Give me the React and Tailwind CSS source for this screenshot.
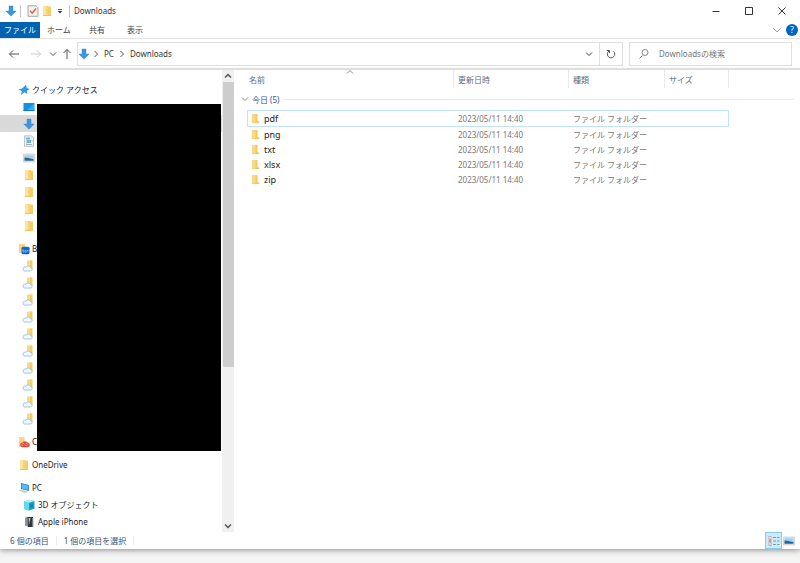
import React, { useState } from "react";

const files = [
  { name: "pdf", date: "2023/05/11 14:40", type: "ファイル フォルダー" },
  { name: "png", date: "2023/05/11 14:40", type: "ファイル フォルダー" },
  { name: "txt", date: "2023/05/11 14:40", type: "ファイル フォルダー" },
  { name: "xlsx", date: "2023/05/11 14:40", type: "ファイル フォルダー" },
  { name: "zip", date: "2023/05/11 14:40", type: "ファイル フォルダー" },
];

const groups = [
  {
    label: "クイック アクセス",
    icon: "star",
    items: [
      { icon: "desktop" },
      { icon: "download", active: true },
      { icon: "document" },
      { icon: "picture" },
      { icon: "folder" },
      { icon: "folder" },
      { icon: "folder" },
      { icon: "folder" },
    ],
  },
  {
    label: "B",
    icon: "box",
    items: Array.from({ length: 10 }, () => ({ icon: "cloudFolder" })),
  },
  { label: "C", icon: "creative", items: [] },
  { label: "OneDrive", icon: "folder", items: [] },
  {
    label: "PC",
    icon: "pc",
    items: [
      { icon: "cube", label: "3D オブジェクト" },
      { icon: "phone", label: "Apple iPhone" },
    ],
  },
];

const shapes = {
  folder: (
    <>
      <path d="M2 1h6v10H2z" fill="#f7d478" />
      <path d="M2 1h3v10H2z" fill="#fbe3a0" />
      <path d="M7 2l3-.5V10l-1 1H7z" fill="#f5cd68" />
      <path d="M2 10h8v1H2z" fill="#efc25a" />
    </>
  ),
  // Folder with its flap open to the right, used in the file list
  openFolder: (
    <>
      <path d="M2 1h6v9H2z" fill="#f8d987" />
      <path d="M6 1h2v8h2v2H6z" fill="#f3c95f" />
      <path d="M2 10h8v1H2z" fill="#f3c95f" />
    </>
  ),
  download: (
    <path d="M4 1h4v5h3.2L6 11.2.8 6H4z" fill="#3d97e0" stroke="#2a7fc8" strokeWidth=".4" />
  ),
  star: (
    <path
      d="M8 .8l.8 3.200 3 .9-2.700 1.700.1 3.400-2.700-1.800L3 11l.8-3.800L.6 5.200l3.600-.6z"
      fill="#2d9ae8"
    />
  ),
  desktop: (
    <>
      <path d="M.5 2h11v8H.5z" fill="#1590df" />
      <path d="M11 2.500v7H4z" fill="#2db2f5" />
      <path d="M.5 9h11v1H.5z" fill="#0e78c5" />
    </>
  ),
  document: (
    <>
      <path d="M1.500.8h7l2 2v8.600h-9z" fill="#edf2f5" stroke="#a3adb5" strokeWidth=".7" />
      <path d="M3 2.500h4v2H3zM4 5h4v3H4z" fill="#69b3dc" />
      <path d="M3 6h1M3 8h1M3 9.500h6M8.500 5.500h1" stroke="#7795a8" strokeWidth=".7" />
    </>
  ),
  picture: (
    <>
      <path d="M.4 2h11.200v8H.4z" fill="#e6e9ec" stroke="#b5bcc2" strokeWidth=".6" />
      <path d="M1.500 3.200h9v5.500h-9z" fill="#a4cff5" />
      <path d="M1.500 5.500l3 .2 6 1.500v1.500h-9z" fill="#386a86" />
      <path d="M2 7.500h8" stroke="#2360a5" />
    </>
  ),
  cloudFolder: (
    <>
      <path d="M5 .5h5v9.500H5z" fill="#f8d985" />
      <path d="M8 .5h2.500v8.500H8z" fill="#f5cb62" />
      <path
        d="M2.200 11h6.300a1.600 1.600 0 0 0 .2-3.200A2.600 2.600 0 0 0 4 7.200 1.900 1.900 0 0 0 2.200 11z"
        fill="#f2f8fe"
        stroke="#94bfea"
        strokeWidth=".9"
      />
    </>
  ),
  box: (
    <>
      <path d="M1 1h6v9H1z" fill="#f8d67b" />
      <rect x="3.500" y="3.800" width="8" height="7.400" rx="1.500" fill="#1267d6" />
      <path
        d="M5 6v2M5.500 7.500a.7.700 0 1 0 .1 0M7.500 7.500a.7.700 0 1 0 .1 0M9 7l1.300 1.500M10.300 7L9 8.500"
        fill="none"
        stroke="#b5d4fa"
        strokeWidth=".6"
      />
    </>
  ),
  creative: (
    <>
      <path d="M1 1h5.500v10H1z" fill="#f8d67b" />
      <path d="M4.500 11.200h5a2.300 2.300 0 0 0 0-4.600 3 3 0 0 0-5-.2 2.400 2.400 0 0 0 0 4.800z" fill="#e5473d" />
      <path d="M5 9.800a1.200 1.200 0 1 1 1-2l1.500 1.500a1.200 1.200 0 1 0 .5-2" fill="none" stroke="#f7aaa2" strokeWidth=".7" />
    </>
  ),
  pc: (
    <>
      <path d="M3 1l8 2v6L3 7z" fill="#2d83c9" />
      <path d="M3.800 2l6.500 1.600v4.400L3.800 6.500z" fill="#5db7f2" />
      <path d="M.5 8.500L4 7.800l6.500 2-3.500 1.200z" fill="#c4ced6" />
    </>
  ),
  cube: (
    <>
      <path d="M1 2.500L6.500.8 11.500 2v7.800L6 11.500 1 10z" fill="#17a5c4" />
      <path d="M1 2.500l5 1.200v7.800L1 10z" fill="#65d8ea" />
      <path d="M1 2.500L6.500.8 11.500 2 6 3.700z" fill="#b6f0f6" />
      <path d="M7.500 5l2.500-.7v4L7.500 9z" fill="#0f84ad" />
    </>
  ),
  phone: (
    <>
      <path d="M2 1.500l3-.7v9.700l-3-.8z" fill="#8f9699" />
      <path d="M4.500 1h5.500v10H5z" fill="#30363a" />
      <path d="M5.500 2h2l-1.500 7z" fill="#b8bfc3" />
      <path d="M9 2h1.300v9H9z" fill="#767d81" />
    </>
  ),
  tasks: (
    <>
      <path d="M1 .8h8l2 2v8.500H1z" fill="#f4f4f4" stroke="#8f8f8f" strokeWidth=".8" />
      <path d="M3 5.800l2.200 2.400L9 3.500" fill="none" stroke="#e8612c" strokeWidth="1.500" />
    </>
  ),
  details: (
    <>
      <path d="M.5 1h3v10h-3z" fill="#bbb3ad" />
      <path d="M1.200 2h1.500v1.500H1.200zM1.200 8.200h1.500v1.500H1.200z" fill="#eef2f4" />
      <path d="M1.200 5h1.500v1.500H1.200z" fill="#e4875f" />
      <path d="M5 2.500h3M9 2.500h2.500M5 6h3M9 6h2.500M5 9.500h3M9 9.500h2.500" stroke="#829aa6" />
    </>
  ),
};

function Icon({ name, className = "size-3" }) {
  return (
    <svg viewBox="0 0 12 12" className={`shrink-0 ${className}`} aria-hidden="true">
      {shapes[name]}
    </svg>
  );
}

// Thin line icons share one 12px grid
function Line({ d, className = "size-3", width = 1 }) {
  return (
    <svg
      viewBox="0 0 12 12"
      className={`shrink-0 ${className}`}
      fill="none"
      stroke="currentColor"
      strokeWidth={width}
      aria-hidden="true"
    >
      <path d={d} />
    </svg>
  );
}

const up = "M3 7.500l3-3 3 3";
const down = "M3 4.500l3 3 3-3";
const right = "M4.500 3l3 3-3 3";

function TitleBar() {
  return (
    <header className="flex h-[22px] items-center pl-[5px] text-[#333]">
      <Icon name="download" />
      <span className="ml-[3px] h-3 w-px bg-[#c4c4c4]"></span>
      <button type="button" aria-label="プロパティ" className="ml-[6px]">
        <Icon name="tasks" />
      </button>
      <button type="button" aria-label="新しいフォルダー" className="ml-[2px]">
        <Icon name="folder" />
      </button>
      <button type="button" aria-label="クイック アクセス ツール バー" className="ml-[1px]">
        <svg viewBox="0 0 12 12" className="size-3" aria-hidden="true">
          <path d="M4 4.500h4" stroke="#555" />
          <path d="M3.700 6h4.600L6 8.500z" fill="#333" />
        </svg>
      </button>
      <span className="ml-[3px] h-3 w-px bg-[#c4c4c4]"></span>
      <h1 className="ml-1">Downloads</h1>
      <div className="mr-[2px] ml-auto flex">
        <button type="button" aria-label="最小化" className="flex w-[33px] justify-center">
          <Line d="M2.500 6.500h7" />
        </button>
        <button type="button" aria-label="最大化" className="flex w-[33px] justify-center">
          <Line d="M2.500 2.500h7v7h-7z" />
        </button>
        <button type="button" aria-label="閉じる" className="flex w-[33px] justify-center">
          <Line d="M2.500 2.500l7 7M9.500 2.500l-7 7" />
        </button>
      </div>
    </header>
  );
}

function RibbonTabs() {
  return (
    <nav className="flex h-[17px] border-b border-[#e3e3e3] leading-4 text-[#444]">
      <button type="button" className="w-10 bg-[#0063b1] text-white">
        ファイル
      </button>
      <button type="button" className="w-[38px]">ホーム</button>
      <button type="button" className="w-[38px]">共有</button>
      <button type="button" className="w-[38px]">表示</button>
      <button type="button" aria-label="リボンの展開" className="ml-auto text-[#aaa]">
        <Line d="M2 4l4 4 4-4" />
      </button>
      <button
        type="button"
        aria-label="ヘルプ"
        className="my-[2px] mr-[2px] ml-[3px] size-3 rounded-full bg-[#0067c0] leading-3 text-white"
      >
        ?
      </button>
    </nav>
  );
}

function AddressBar() {
  return (
    <div className="flex h-[31px] items-center border-b-2 border-[#dedede] px-2 text-[#333]">
      <button type="button" aria-label="戻る" className="text-[#555]">
        <Line d="M11 6H1.500M5 2.500L1.500 6 5 9.500" />
      </button>
      <button type="button" aria-label="進む" className="ml-[10px] text-[#ccc]">
        <Line d="M1 6h9.500M7 2.500L10.500 6 7 9.500" />
      </button>
      <button type="button" aria-label="最近表示した場所" className="ml-[5px] text-[#555]">
        <Line d={down} />
      </button>
      <button type="button" aria-label="上へ" className="ml-[2px] text-[#555]">
        <Line d="M6 11V1.500M2.500 5L6 1.500 9.500 5" />
      </button>
      <div className="ml-1 flex h-6 flex-1 items-center border border-[#e0e0e0]">
        <Icon name="download" />
        <Line d={right} className="size-3 text-[#555]" />
        <a href="#pc" className="ml-[2px]">PC</a>
        <Line d={right} className="ml-[2px] size-3 text-[#555]" />
        <a href="#downloads" className="ml-[2px]">Downloads</a>
        <button type="button" aria-label="以前の場所" className="mr-1 ml-auto text-[#444]">
          <Line d={down} />
        </button>
        <button
          type="button"
          aria-label="更新"
          className="flex h-full w-[23px] items-center justify-center border-l border-[#e0e0e0] text-[#555]"
        >
          <Line d="M4 3a3.700 3.700 0 1 0 4.500.3M1.800 2.500h2.700v2.700" />
        </button>
      </div>
      <label className="ml-[6px] flex h-6 w-[163px] items-center border border-[#e0e0e0] text-[#888]">
        <Line d="M4.500 7.500L1.500 10.500M7 1.500a3 3 0 1 1 0 6 3 3 0 1 1 0-6" className="ml-2 size-3" />
        <input
          type="search"
          placeholder="Downloadsの検索"
          aria-label="Downloadsの検索"
          className="ml-[9px] w-full min-w-0 flex-1 outline-none placeholder:text-[#777]"
        />
      </label>
    </div>
  );
}

function Sidebar() {
  return (
    <aside className="relative min-w-0 flex-1 pt-[11px] pb-[2px] leading-[17px] text-[#222]">
      <ul className="flex flex-col gap-[6px]">
        {groups.map((group) => (
          <li key={group.label}>
            <a href="#folder" className="flex h-[17px] items-center gap-[2px] pl-[18px]">
              <Icon name={group.icon} />
              {group.label}
            </a>
            <ul>
              {group.items.map((item, i) => (
                <li key={i}>
                  <a
                    href="#folder"
                    aria-label={item.label || "フォルダー"}
                    className={`flex h-[17px] items-center gap-[3px] ${
                      item.icon === "cloudFolder" ? "pl-[22px]" : "pl-[23px]"
                    } ${item.active ? "bg-[#d9d9d9]" : ""}`}
                  >
                    <Icon name={item.icon} />
                    {item.label}
                  </a>
                </li>
              ))}
            </ul>
          </li>
        ))}
      </ul>
      {/* Masked folder names */}
      <div className="absolute top-[34px] right-[1px] left-[37px] h-[347px] bg-black"></div>
    </aside>
  );
}

function ScrollBar() {
  return (
    <div className="flex w-3 flex-col items-center bg-[#f0f0f0] text-[#555]">
      <button type="button" aria-label="上へスクロール" className="h-3">
        <Line d={up} width={1.5} />
      </button>
      <div className="h-[285px] w-[11px] bg-[#cdcdcd]"></div>
      <button type="button" aria-label="下へスクロール" className="mt-auto h-3">
        <Line d={down} width={1.5} />
      </button>
    </div>
  );
}

function FileList() {
  const [selected, setSelected] = useState("pdf");

  const cell = (name) =>
    name === selected ? "h-[17px] border-y border-[#bfe2fa]" : "h-[15px]";

  return (
    <main className="min-w-0 flex-1 pr-[6px] pl-[13px]">
      <table className="w-full table-fixed border-separate border-spacing-0 text-left leading-[15px] text-[#777]">
        <colgroup>
          <col className="w-[207px]" />
          <col className="w-[115px]" />
          <col className="w-[96px]" />
          <col className="w-[64px]" />
          <col />
        </colgroup>
        <thead className="text-[#5c6b80]">
          <tr className="h-[18px]">
            <th className="relative border-r border-[#e8e8e8] pl-[2px] font-normal">
              名前
              <Line d={up} className="absolute top-[-4px] left-[97px] size-3 text-[#888]" />
            </th>
            <th className="border-r border-[#e8e8e8] pl-1 font-normal">更新日時</th>
            <th className="border-r border-[#e8e8e8] pl-1 font-normal">種類</th>
            <th className="border-r border-[#e8e8e8] pl-1 font-normal">サイズ</th>
            <td></td>
          </tr>
        </thead>
        <tbody>
          <tr className="h-[22px]">
            <th colSpan={5} className="font-normal text-[#3c4a9c]">
              <div className="-ml-2 flex items-center">
                <button type="button" aria-label="グループを折りたたむ" className="text-[#888]">
                  <Line d={down} />
                </button>
                <span className="ml-px">今日 (5)</span>
                <span className="ml-[5px] h-px flex-1 bg-[#e8e8e8]"></span>
              </div>
            </th>
          </tr>
          {files.map((file) => (
            <tr key={file.name} onClick={() => setSelected(file.name)}>
              <td
                className={`text-[9px] text-[#222] ${cell(file.name)} ${
                  file.name === selected ? "border-l pl-[2px]" : "pl-[3px]"
                }`}
              >
                <div className="flex items-center gap-[3px]">
                  <Icon name="openFolder" className="size-[11px]" />
                  {file.name}
                </div>
              </td>
              <td className={`pl-1 ${cell(file.name)}`}>{file.date}</td>
              <td className={`pl-1 ${cell(file.name)}`}>{file.type}</td>
              <td className={`${cell(file.name)} ${file.name === selected ? "border-r" : ""}`}></td>
              <td></td>
            </tr>
          ))}
        </tbody>
      </table>
    </main>
  );
}

function StatusBar() {
  return (
    <footer className="flex h-[17px] items-center pr-[5px] pl-[10px] text-[#3d5373]">
      <span>6 個の項目</span>
      <span className="mx-[7px] h-[9px] w-px bg-[#ececec]"></span>
      <span>1 個の項目を選択</span>
      <span className="mx-[7px] h-[9px] w-px bg-[#ececec]"></span>
      <button
        type="button"
        aria-label="詳細"
        className="ml-auto flex size-[17px] items-center justify-center border border-[#84cdee] bg-[#cdeaf8]"
      >
        <Icon name="details" />
      </button>
      <button type="button" aria-label="大アイコン" className="ml-[1px]">
        <Icon name="picture" />
      </button>
    </footer>
  );
}

export default function App() {
  return (
    <div className="min-h-screen bg-[#f5f5f5] pb-[14px] font-['Noto_Sans','Noto_Sans_CJK_JP',sans-serif] text-[8px]">
      <div className="bg-white shadow-[0_1px_6px_rgba(0,0,0,0.45)]">
        <TitleBar />
        <RibbonTabs />
        <AddressBar />
        <div className="flex">
          <div className="flex w-[234px]">
            <Sidebar />
            <ScrollBar />
          </div>
          <FileList />
        </div>
        <StatusBar />
      </div>
    </div>
  );
}
